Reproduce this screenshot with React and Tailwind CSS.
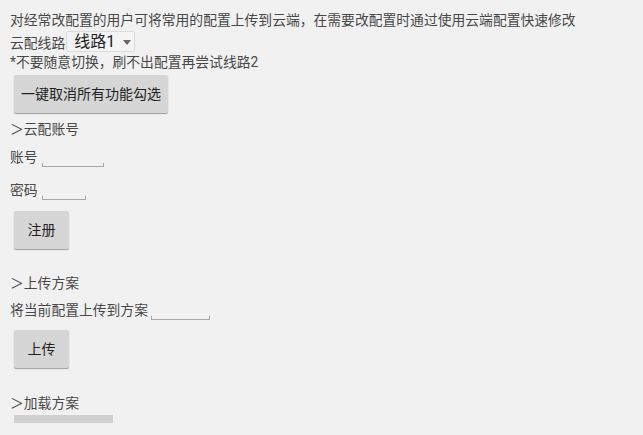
const Field = ({ width }) => (
  <div className="relative h-[22px]" style={{ width }}>
    <div className="absolute bottom-[1px] left-0 right-0 h-[4px] border-b border-l border-r border-[#a8a8a8]" />
  </div>
);

const Button = ({ children, className = '' }) => (
  <button
    type="button"
    className={`h-[38px] rounded-[2px] bg-[#d6d6d6] text-[14px] text-[#222] shadow-[0_1px_1px_rgba(0,0,0,0.35)] ${className}`}
  >
    {children}
  </button>
);

const App = () => {
  return (
    <div
      className="h-[435px] w-[643px] overflow-hidden bg-[#f1f1f1] pl-[10px] pt-[10px] text-[13.8px] text-[#484848]"
      style={{ fontFamily: 'Roboto, "Noto Sans CJK SC", sans-serif' }}
    >
      <div className="flex flex-col">
        <div className="h-[21px] leading-[20px]">
          对经常改配置的用户可将常用的配置上传到云端，在需要改配置时通过使用云端配置快速修改
        </div>

        <div className="flex h-[22px] items-start">
          <span className="leading-[24px]">云配线路</span>
          <div className="relative ml-[1px] flex h-[21px] w-[69px] items-center rounded-[2px] border border-[#dcdcdc] bg-[#f4f4f4] pl-[7px] text-[16px] text-[#222]">
            线路1
            <span className="absolute right-[3px] top-[8px] h-0 w-0 border-l-[4px] border-r-[4px] border-t-[5px] border-l-transparent border-r-transparent border-t-[#666]" />
          </div>
        </div>

        <div className="h-[18px] leading-[18px]">*不要随意切换，刷不出配置再尝试线路2</div>

        <Button className="ml-[4px] mt-[4px] w-[154px]">一键取消所有功能勾选</Button>

        <div className="mt-[7px] h-[18px] leading-[18px]">＞云配账号</div>

        <div className="mt-[8px] flex items-start">
          <span className="leading-[22px]">账号</span>
          <div className="ml-[4px]">
            <Field width={62} />
          </div>
        </div>

        <div className="mt-[11px] flex items-start">
          <span className="leading-[22px]">密码</span>
          <div className="ml-[4px]">
            <Field width={44} />
          </div>
        </div>

        <Button className="ml-[4px] mt-[10px] w-[55px]">注册</Button>

        <div className="mt-[25px] h-[18px] leading-[18px]">＞上传方案</div>

        <div className="mt-[7px] flex items-start">
          <span className="leading-[22px]">将当前配置上传到方案</span>
          <div className="ml-[3px]">
            <Field width={59} />
          </div>
        </div>

        <Button className="ml-[4px] mt-[9px] w-[55px]">上传</Button>

        <div className="mt-[26px] h-[18px] leading-[18px]">＞加载方案</div>

        <div className="ml-[4px] mt-[3px] h-[8px] w-[99px] bg-[#d0d0d0]" />
      </div>
    </div>
  );
};

export default App;
